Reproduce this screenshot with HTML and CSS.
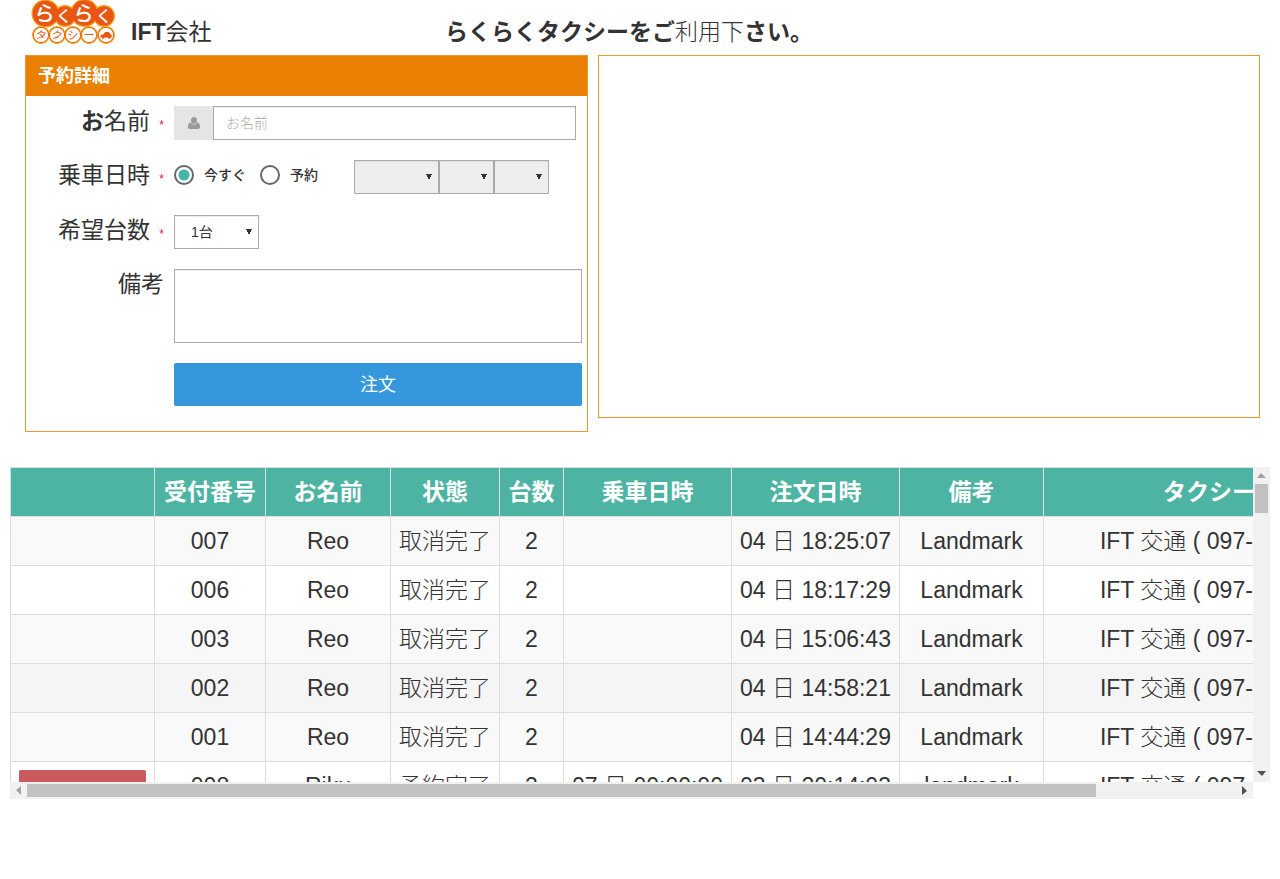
FILE: index.html
```html
<!DOCTYPE html>
<html lang="ja">
<head>
<meta charset="utf-8">
<title>らくらくタクシー</title>
<meta name="viewport" content="width=device-width, initial-scale=1">
<link rel="stylesheet" href="styles.css">
</head>
<body>
<header class="top">
  <svg class="logo" viewBox="0 0 84 45" role="img" aria-label="らくらくタクシー">
    <g fill="#f7a01c">
      <circle cx="13.500" cy="13.500" r="14"/><circle cx="33" cy="16" r="11"/><circle cx="52.500" cy="13" r="14"/><circle cx="72" cy="16" r="11"/>
      <circle cx="9" cy="35" r="9"/><circle cx="25" cy="35" r="9"/><circle cx="41" cy="35" r="9"/><circle cx="57" cy="35" r="9"/><circle cx="74" cy="35" r="9"/>
    </g>
    <g fill="#e95513">
      <circle cx="13.500" cy="13.500" r="12.800"/><circle cx="33" cy="16" r="9.800"/><circle cx="52.500" cy="13" r="12.800"/><circle cx="72" cy="16" r="9.800"/>
    </g>
    <g fill="#fff" stroke="#ea6a12" stroke-width="1">
      <circle cx="9" cy="35" r="7.600"/><circle cx="25" cy="35" r="7.600"/><circle cx="41" cy="35" r="7.600"/><circle cx="57" cy="35" r="7.600"/><circle cx="74" cy="35" r="7.600"/>
    </g>
    <g class="logo-big">
      <text x="13" y="21" transform="rotate(12 13 13)">ら</text>
      <text class="logo-ku" x="32" y="22">く</text>
      <text x="52" y="21" transform="rotate(12 52 13)">ら</text>
      <text class="logo-ku" x="72" y="22">く</text>
    </g>
    <g class="logo-small">
      <text x="9" y="39" transform="rotate(15 9 35)">タ</text>
      <text x="25" y="39" transform="rotate(15 25 35)">ク</text>
      <text x="41" y="39" transform="rotate(-8 41 35)">シ</text>
      <text x="57" y="39">ー</text>
    </g>
    <path fill="#e95513" d="M68.500 37.500V35l3-.8 1.700-2.200h3.600l1.700 2.200 1.200.6v2.700h-1a1.300 1.300 0 0 1-2.600 0h-3.500a1.300 1.300 0 0 1-2.600 0z"/>
  </svg>
  <h1 class="company">IFT<span class="kanji">会社</span></h1>
  <p class="welcome">らくらくタクシーをご<span class="kanji-light">利用下</span>さい。</p>
</header>

<main>
  <div class="columns">
    <form class="panel">
      <h2 class="panel-title">予約詳細</h2>
      <div class="panel-body">
        <label class="label" for="name">お<span class="kanji">名前</span> <span class="req">*</span></label>
        <div class="name-group">
          <span class="addon"><svg class="user" viewBox="0 0 12 12" aria-hidden="true"><ellipse cx="6" cy="3.500" rx="3" ry="3.500"/><path d="M2.600 5.600C3.400 7 4.600 7.700 6 7.700S8.600 7 9.400 5.600C11.400 6 12 8 12 10c0 1.200-.8 2-1.900 2H1.900C.8 12 0 11.200 0 10c0-2 .6-4 2.600-4.400z"/></svg></span>
          <input class="field name" id="name" type="text" placeholder="お名前">
        </div>

        <span class="label"><span class="kanji">乗車日時</span> <span class="req">*</span></span>
        <div class="when">
          <label class="choice"><input class="radio" type="radio" name="when" checked>今すぐ</label>
          <label class="choice"><input class="radio" type="radio" name="when">予約</label>
          <div class="times">
            <select class="field select day" aria-label="日" disabled></select>
            <select class="field select" aria-label="時" disabled></select>
            <select class="field select" aria-label="分" disabled></select>
          </div>
        </div>

        <label class="label" for="cars"><span class="kanji">希望台数</span> <span class="req">*</span></label>
        <div class="cars"><select class="field select day" id="cars"><option>1台</option><option>2台</option></select></div>

        <label class="label" for="note"><span class="kanji">備考</span></label>
        <textarea class="field note" id="note"></textarea>

        <button class="order" type="button">注文</button>
      </div>
    </form>
    <section class="map" aria-label="地図"></section>
  </div>

  <section class="grid">
    <div class="view">
      <table class="orders">
        <colgroup><col class="c-act"><col class="c-no"><col class="c-name"><col class="c-state"><col class="c-count"><col class="c-time"><col class="c-time"><col class="c-act"><col class="c-taxi"></colgroup>
        <thead><tr><th></th><th>受付番号</th><th>お名前</th><th>状態</th><th>台数</th><th>乗車日時</th><th>注文日時</th><th>備考</th><th>タクシー会社</th></tr></thead>
        <tbody>
          <tr><td></td><td>007</td><td>Reo</td><td>取消完了</td><td>2</td><td></td><td>04 日 18:25:07</td><td>Landmark</td><td>IFT 交通 ( 097-000-0000 )</td></tr>
          <tr><td></td><td>006</td><td>Reo</td><td>取消完了</td><td>2</td><td></td><td>04 日 18:17:29</td><td>Landmark</td><td>IFT 交通 ( 097-000-0000 )</td></tr>
          <tr><td></td><td>003</td><td>Reo</td><td>取消完了</td><td>2</td><td></td><td>04 日 15:06:43</td><td>Landmark</td><td>IFT 交通 ( 097-000-0000 )</td></tr>
          <tr class="active"><td></td><td>002</td><td>Reo</td><td>取消完了</td><td>2</td><td></td><td>04 日 14:58:21</td><td>Landmark</td><td>IFT 交通 ( 097-000-0000 )</td></tr>
          <tr><td></td><td>001</td><td>Reo</td><td>取消完了</td><td>2</td><td></td><td>04 日 14:44:29</td><td>Landmark</td><td>IFT 交通 ( 097-000-0000 )</td></tr>
          <tr><td><button class="cancel" type="button" aria-label="取消"></button></td><td>008</td><td>Riku</td><td>予約完了</td><td>2</td><td>07 日 00:00:00</td><td>03 日 20:14:03</td><td>landmark</td><td>IFT 交通 ( 097-000-0000 )</td></tr>
        </tbody>
      </table>
    </div>
    <div class="bar bar-v"><i class="arrow up"></i><i class="thumb"></i><i class="arrow down"></i></div>
    <div class="bar bar-h"><i class="arrow left"></i><i class="thumb"></i><i class="arrow right"></i></div>
  </section>
</main>
</body>
</html>
```
FILE: styles.css
```css
* { box-sizing: border-box; }
body {
  margin: 0;
  color: #333;
  background: #fff;
  font: 14px/20px "Liberation Sans", "Noto Sans CJK JP", sans-serif;
}
.top {
  display: grid;
  grid-template-columns: 99px 314px 1fr;
  align-items: start;
  height: 55px;
  padding-left: 32px;
}
.logo { width: 84px; height: 45px; overflow: visible; }
.company, .welcome { margin: 0; padding-top: 16px; font-size: 23px; line-height: 32px; font-weight: 700; }
.kanji { font-weight: 400; }
.kanji-light { font-weight: 300; }

.columns {
  display: grid;
  grid-template-columns: 563fr 662fr;
  column-gap: 10px;
  align-items: start;
  padding: 0 20px 0 25px;
}
.panel, .map { border: 1px solid #f0962c; }
.map { height: 363px; }
.panel-title {
  margin: 0;
  padding: 10px 12px;
  background: #e98003;
  color: #fff;
  font-size: 18px;
  line-height: 20px;
}
.panel-body {
  display: grid;
  grid-template-columns: 138px 1fr;
  column-gap: 10px;
  row-gap: 20px;
  padding: 10px 5px 25px 0;
}
.label { height: 34px; text-align: right; font-size: 23px; line-height: 30px; font-weight: 700; white-space: nowrap; }
.req { margin-left: 3px; color: #e02038; font-size: 12px; line-height: 12px; font-weight: 400; }
.field {
  height: 34px;
  border: 1px solid #aaa;
  border-radius: 0;
  background-color: #fff;
  color: #333;
  font: inherit;
  box-shadow: inset 0 1px 1px rgba(0, 0, 0, .075);
}
.name-group { display: flex; padding-right: 6px; }
.addon { display: flex; align-items: center; justify-content: center; width: 39px; height: 34px; background: #e5e5e5; }
.user { width: 12px; height: 12px; fill: #999; }
.name { flex: 1; min-width: 0; padding: 6px 12px; }
.name::placeholder { color: #aaa; font-weight: 300; }
.when, .cars { display: flex; }
.when { min-height: 35px; }
.choice { display: flex; align-items: center; gap: 10px; height: 30px; margin-right: 14px; font-weight: 500; }
.radio {
  appearance: none;
  width: 20px;
  height: 20px;
  margin: 0;
  border: 2px solid #666;
  border-radius: 50%;
}
.radio:checked { background: radial-gradient(circle, #45b5aa 5px, #fff 6px); }
.times { display: flex; margin-left: 22px; }
.select {
  appearance: none;
  width: 55px;
  padding: 0 16px;
  background-image: linear-gradient(to bottom right, #333 50%, transparent 51%), linear-gradient(to bottom left, #333 50%, transparent 51%);
  background-repeat: no-repeat;
  background-size: 3px 6px;
  background-position: right 6px center, right 9px center;
  opacity: 1;
}
.day { width: 85px; }
.select:disabled { background-color: #eee; }
.note { display: block; width: 100%; height: 74px; resize: none; }
.order {
  grid-column: 2;
  height: 43px;
  padding: 0 0 4px;
  border: 0;
  border-radius: 2px;
  background: #3598dc;
  color: #fff;
  font: 18px/24px "Noto Sans CJK JP", sans-serif;
}

.grid {
  display: grid;
  grid-template-columns: 1fr 17px;
  grid-template-rows: 315px 17px;
  margin: 35px 10px 0;
}
.view { overflow: hidden; }
.orders { width: 1410px; table-layout: fixed; border-collapse: collapse; font-size: 23px; }
.c-act { width: 144px; }
.c-no { width: 111px; }
.c-name { width: 125px; }
.c-state { width: 109px; }
.c-count { width: 64px; }
.c-time { width: 168px; }
.c-taxi { width: 377px; }
.orders th, .orders td {
  height: 49px;
  padding: 8px;
  border: 1px solid #ddd;
  text-align: center;
  line-height: 32px;
  white-space: nowrap;
  font-weight: 300;
}
.orders th { background: #4db3a2; color: #fff; font-weight: 700; }
.orders tbody tr:nth-child(odd) { background: #f9f9f9; }
.orders tbody .active { background: #f5f5f5; }
.cancel { display: block; width: 100%; height: 32px; border: 0; border-radius: 2px; background: #cb5a5e; }
.bar { display: flex; background: #f1f1f1; }
.bar-v { flex-direction: column; }
.thumb { background: #c1c1c1; }
.bar-v .thumb { height: 29px; margin: 0 2px auto; }
.bar-h .thumb { width: 86%; margin: 2px auto 2px 0; }
.arrow { flex: none; width: 17px; height: 17px; background: #505050; }
.up { background: #a3a3a3; clip-path: polygon(4px 11px, 13px 11px, 8px 6px); }
.down { clip-path: polygon(4px 6px, 13px 6px, 9px 11px); }
.left { background: #a3a3a3; clip-path: polygon(11px 4px, 11px 13px, 6px 8px); }
.right { clip-path: polygon(6px 4px, 6px 13px, 11px 9px); }

.logo text { text-anchor: middle; font-family: "Noto Sans CJK JP", sans-serif; }
.logo-big { fill: #fff; font-size: 21px; font-weight: 500; }
.logo-ku { font-size: 16px; }
.logo-small { fill: #e95513; font-size: 11px; }
```
